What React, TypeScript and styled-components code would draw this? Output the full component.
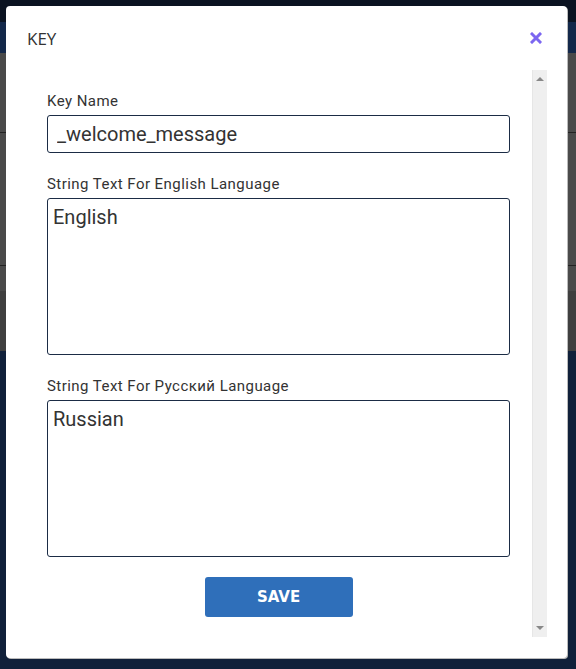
import React from 'react';
import styled, { createGlobalStyle } from 'styled-components';

const GlobalStyle = createGlobalStyle`
  html, body {
    margin: 0;
    padding: 0;
    background: #10203a;
    font-family: Roboto, "Liberation Sans", sans-serif;
  }
`;

const Page = styled.div`
  position: relative;
  width: 576px;
  height: 669px;
  overflow: hidden;
  display: flex;
  flex-direction: column;
  background: #10203a;
`;

const TopStrip = styled.div`
  height: 22px;
  background: #0b1321;
`;

const NavBand = styled.div`
  height: 31px;
  background: #13284a;
`;

const GrayArea = styled.div<{ $h: number; $dark?: boolean; $line?: boolean }>`
  height: ${({ $h }) => $h}px;
  background: ${({ $dark }) => ($dark ? '#3f3f3f' : '#4a4a4a')};
  border-bottom: ${({ $line }) => ($line ? '1px solid #222' : 'none')};
`;

const Modal = styled.div`
  position: absolute;
  left: 6px;
  top: 6px;
  width: 561px;
  height: 652px;
  background: #fff;
  border-radius: 4px;
  box-shadow: 1px 1px 0 #bbb;
  display: flex;
  flex-direction: column;
`;

const Header = styled.div`
  height: 64px;
  display: flex;
  align-items: center;
  justify-content: space-between;
  padding: 0 24px 0 21px;
`;

const Title = styled.h2`
  margin: 0;
  font-family: "Open Sans", sans-serif;
  font-weight: 400;
  font-size: 17px;
  color: #333;
`;

const Close = styled.button`
  border: 0;
  background: none;
  padding: 0;
  width: 14px;
  height: 14px;
  display: flex;
  align-items: center;
  justify-content: center;
  cursor: pointer;
`;

const BodyRow = styled.div`
  display: flex;
  margin: 0 20px 0 22px;
  height: 567px;
`;

const Content = styled.div`
  flex: 1;
  padding: 21px 22px 0 19px;
  display: flex;
  flex-direction: column;
`;

const Label = styled.label`
  display: block;
  height: 20px;
  line-height: 20px;
  font-size: 15px;
  letter-spacing: 0.45px;
  color: #333;
  margin-bottom: 4px;
`;

const Field = styled.div<{ $gap: number }>`
  margin-bottom: ${({ $gap }) => $gap}px;
`;

const TextInput = styled.input`
  box-sizing: border-box;
  display: block;
  width: 100%;
  height: 38px;
  border: 1px solid #1b2c45;
  border-radius: 3px;
  padding: 0 9px;
  font-family: Roboto, sans-serif;
  font-size: 20px;
  color: #333;
  outline: none;
`;

const TextArea = styled.textarea`
  box-sizing: border-box;
  display: block;
  width: 100%;
  height: 157px;
  border: 1px solid #1b2c45;
  border-radius: 3px;
  padding: 6px 5px;
  font-family: Roboto, sans-serif;
  font-size: 20px;
  color: #333;
  resize: none;
  outline: none;
`;

const SaveButton = styled.button`
  align-self: center;
  width: 148px;
  height: 40px;
  border: 0;
  border-radius: 3px;
  background: #2f6fba;
  color: #fff;
  font-family: "DejaVu Sans", Verdana, sans-serif;
  font-weight: 700;
  font-size: 15px;
  margin-top: 20px;
`;

const Track = styled.div`
  width: 15px;
  background: #efefef;
  border-left: 1px solid #e6e6e6;
  display: flex;
  flex-direction: column;
  justify-content: space-between;
  align-items: center;
  padding: 7px 0;
  box-sizing: border-box;
`;

const Arrow = styled.div<{ $down?: boolean }>`
  width: 0;
  height: 0;
  border-left: 4px solid transparent;
  border-right: 4px solid transparent;
  ${({ $down }) =>
    $down ? 'border-top: 4px solid #888;' : 'border-bottom: 4px solid #888;'}
`;

export default function App() {
  return (
    <>
      <GlobalStyle />
      <Page>
        <TopStrip />
        <NavBand />
        <GrayArea $h={79} $line />
        <GrayArea $h={132} $line />
        <GrayArea $h={25} />
        <GrayArea $h={60} $dark />
        <Modal>
          <Header>
            <Title>KEY</Title>
            <Close aria-label="close">
              <svg width="12" height="12" viewBox="0 0 12 12">
                <path d="M2 2 L10 10 M10 2 L2 10" stroke="#7b66f0" strokeWidth="3" strokeLinecap="square" />
              </svg>
            </Close>
          </Header>
          <BodyRow>
            <Content>
              <Field $gap={21}>
                <Label>Key Name</Label>
                <TextInput defaultValue="_welcome_message" />
              </Field>
              <Field $gap={21}>
                <Label>String Text For English Language</Label>
                <TextArea defaultValue="English" />
              </Field>
              <Field $gap={0}>
                <Label>String Text For Русский Language</Label>
                <TextArea defaultValue="Russian" />
              </Field>
              <SaveButton>SAVE</SaveButton>
            </Content>
            <Track>
              <Arrow />
              <Arrow $down />
            </Track>
          </BodyRow>
        </Modal>
      </Page>
    </>
  );
}
